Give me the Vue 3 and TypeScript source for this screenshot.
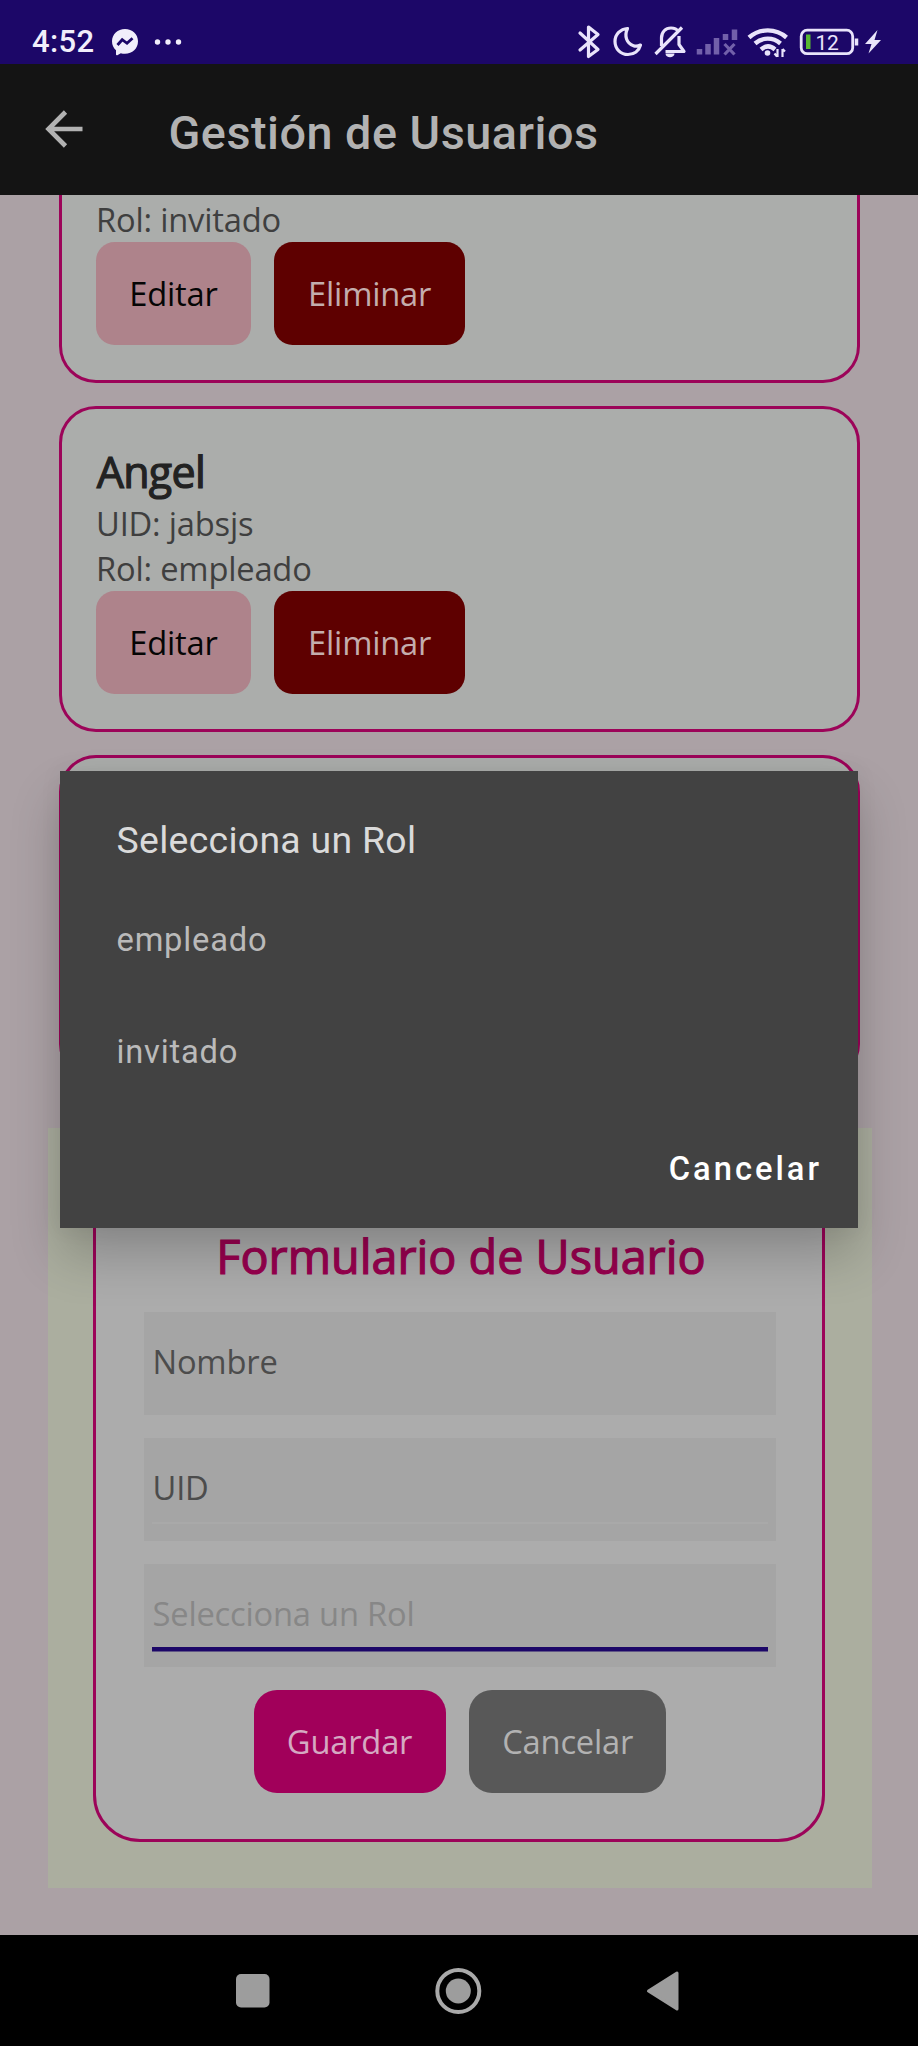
<script setup lang="ts">
interface User {
  id: number
  name?: string
  uid?: string
  role?: string
}

const users: User[] = [
  { id: 1, role: 'invitado' },
  { id: 2, name: 'Angel', uid: 'jabsjs', role: 'empleado' },
  { id: 3 },
]

const fields = [
  { label: 'Nombre', kind: 'plain' },
  { label: 'UID', kind: 'plain lined' },
  { label: 'Selecciona un Rol', kind: 'active' },
]

const roles: string[] = ['empleado', 'invitado']
</script>

<template>
  <div class="screen">
    <header class="status">
      <div class="status-left">
        <span class="clock">4:52</span>
        <svg class="messenger" width="28" height="28" viewBox="0 0 28 28">
          <path d="M14 1C6.700 1 1 6.200 1 13.300c0 3.700 1.500 6.800 4 8.900v4.300c0 .7.700 1 1.300.7l3.500-1.900c1.300.4 2.700.5 4.200.5 7.300 0 13-5.200 13-12.500S21.300 1 14 1z" fill="#f1eefb" />
          <path d="M6.500 17l4.700-5.300 4.800 3.600 5.500-5" fill="none" stroke="#1c0768" stroke-width="2.800" />
        </svg>
        <svg class="dots" width="28" height="8" viewBox="0 0 28 8">
          <circle cx="3.500" cy="4" r="2.700" /><circle cx="14" cy="4" r="2.700" /><circle cx="24.500" cy="4" r="2.700" />
        </svg>
      </div>
      <svg class="status-icons" width="320" height="64" viewBox="570 0 320 64" fill="none" stroke="#e9e4fb" stroke-width="3.200">
        <path d="M580 33l18 16.500-9.500 7V27l9.500 7.500L580 50" stroke-linejoin="round" stroke-linecap="round" />
        <path d="M627.500 28.500c-7 .5-12.500 5.800-12.500 13 0 7.500 5.800 13 13 13 6 0 11-3.700 12.500-9.500-2.500 1.200-5 1.500-7 .7-7-2.300-9.500-9.700-6-17.200z" stroke-linejoin="round" />
        <path d="M661.500 46V38c0-6 4-10 9.500-10 3.500 0 6 1.300 7.800 3.800M682 27.500L655.500 54M679 36v8.500l5 7H665.500" stroke-linejoin="round" />
        <path d="M665.500 53.500h9c0 5-9 5-9 0z" fill="#e9e4fb" stroke="none" />
        <g stroke="#7260aa" stroke-width="5.500">
          <path d="M699.500 54.500V49M708 54.500V44M716.500 54.500V38M725.500 40V34M734.500 40V29.500" />
          <path d="M724.500 44l10 10.500M734.500 44l-10 10.500" stroke-width="3.200" />
        </g>
        <g stroke-width="4.400">
          <path d="M749 37.500c10.500-9.500 27-9.500 37.500 0" />
          <path d="M755 43.500c7.500-6.500 18-6.500 25.500 0" />
          <path d="M761 49.500c4.500-4 9.500-4 14 0" />
        </g>
        <circle cx="767.500" cy="53" r="2.800" fill="#e9e4fb" stroke="none" />
        <path d="M777.500 49v8M782.500 49v8M774.500 53.500l2.500 3M785 51.500l-2.500-2.500" stroke-width="2.200" />
        <rect x="801.200" y="30.200" width="51.500" height="23.500" rx="6" stroke-width="2.800" />
        <path d="M856.500 38.500v7" stroke-width="3.500" />
        <rect x="806" y="34.500" width="4.500" height="14.500" fill="#58b832" stroke="none" />
        <path d="M877.500 30L865 44h6.500l-3 9.500L881 40h-6.500z" fill="#e9e4fb" stroke="none" />
        <text x="815.500" y="49.700" class="battery">12</text>
      </svg>
    </header>

    <div class="appbar">
      <svg width="56" height="56" viewBox="0 0 56 56" fill="none" stroke="#b2b2b2" stroke-width="4.600">
        <path d="M46.500 28H12M29.500 11L12.500 28l17 17" />
      </svg>
      <h1>Gestión de Usuarios</h1>
    </div>

    <main class="content">
      <article v-for="u in users" :key="u.id" class="card">
        <h2 v-if="u.name">{{ u.name }}</h2>
        <p v-if="u.uid">UID: {{ u.uid }}</p>
        <template v-if="u.role">
          <p>Rol: {{ u.role }}</p>
          <div class="row">
            <button class="btn edit">Editar</button>
            <button class="btn remove">Eliminar</button>
          </div>
        </template>
      </article>

      <section class="form-area">
        <form class="form" @submit.prevent>
          <h3>Formulario de Usuario</h3>
          <div v-for="f in fields" :key="f.label" class="field" :class="f.kind">{{ f.label }}</div>
          <div class="row center">
            <button class="btn save">Guardar</button>
            <button class="btn cancel">Cancelar</button>
          </div>
        </form>
      </section>
    </main>

    <nav class="nav">
      <svg width="918" height="111" viewBox="0 1935 918 111" fill="#9d9d9d">
        <rect x="236" y="1974" width="33.500" height="33.500" rx="5" />
        <circle cx="458.300" cy="1991" r="21" fill="none" stroke="#a9a9a9" stroke-width="4" />
        <circle cx="458.300" cy="1991" r="12.500" />
        <path d="M648.500 1991L677 1973v36z" stroke="#9d9d9d" stroke-width="3" stroke-linejoin="round" />
      </svg>
    </nav>

    <div class="dialog" role="dialog">
      <h4>Selecciona un Rol</h4>
      <div v-for="r in roles" :key="r" class="option">{{ r }}</div>
      <div class="actions"><button class="dismiss">Cancelar</button></div>
    </div>
  </div>
</template>

<style>
html,
body {
  margin: 0;
  background: #000;
}
</style>

<style scoped>
.screen {
  position: relative;
  display: flex;
  flex-direction: column;
  width: 918px;
  height: 2046px;
  overflow: hidden;
  font-family: "Open Sans", "Noto Sans", sans-serif;
  font-size: 32.7px;
  letter-spacing: -0.2px;
}
h1, h2, h3, h4, p {
  margin: 0;
  font-weight: 400;
}
button {
  border: 0;
  font: inherit;
  letter-spacing: inherit;
}
.status {
  flex: none;
  height: 64px;
  display: flex;
  justify-content: space-between;
  padding-right: 28px;
  background: #1c0768;
}
.status-left {
  display: flex;
  align-items: center;
  padding: 19px 0 0 32px;
}
.clock {
  width: 63px;
  font: 500 31px/36px Roboto, sans-serif;
  letter-spacing: 0.4px;
  color: #f1eefb;
}
.messenger {
  margin-left: 16px;
}
.dots {
  margin-left: 15px;
  fill: #f1eefb;
}
.battery {
  font: 400 21px Roboto, sans-serif;
  fill: #e9e4fb;
  stroke: none;
}
.appbar {
  flex: none;
  height: 131px;
  display: flex;
  background: #141414;
}
.appbar svg {
  margin: 36.5px 0 0 35.5px;
}
h1 {
  margin: 38.5px 0 0 77px;
  font: 500 46.75px/60px Roboto, sans-serif;
  letter-spacing: 0.5px;
  color: #b2b2b2;
}
.content {
  flex: 1;
  min-height: 0;
  box-sizing: border-box;
  overflow: hidden;
  display: flex;
  flex-direction: column;
  justify-content: flex-end;
  padding: 0 46px 47px 48px;
  background: #aba1a5;
}
.card {
  flex: none;
  box-sizing: border-box;
  display: flex;
  flex-direction: column;
  justify-content: flex-end;
  height: 326px;
  margin: 0 12px 23px 11px;
  padding: 34px 34px 35px;
  border: 3px solid #9c0459;
  border-radius: 37px;
  background: #abadab;
}
h2 {
  font-size: 43px;
  line-height: 57px;
  padding-bottom: 2px;
  letter-spacing: -0.7px;
  text-indent: 0.7px;
  color: #222;
  -webkit-text-stroke: 1.2px #222;
}
.card p {
  line-height: 44.5px;
  color: #3f3f3f;
}
.row {
  display: flex;
  gap: 23.4px;
}
.center {
  justify-content: center;
}
.btn {
  height: 103px;
  padding: 0 0 1px;
  border-radius: 18.5px;
}
.edit {
  width: 155px;
  background: #ae838b;
  color: #050505;
}
.remove {
  width: 190.5px;
  background: #5e0000;
  color: #c4adad;
}
.save {
  width: 192px;
  border-radius: 23px;
  background: #a1005a;
  color: #d5a9c2;
}
.cancel {
  width: 197.5px;
  border-radius: 23px;
  background: #585858;
  color: #b2b2b2;
}
.form-area {
  flex: none;
  margin-top: 24px;
  padding: 46px 46px 46px 45px;
  height: 668px;
  background: #abae9f;
}
.form {
  box-sizing: border-box;
  height: 100%;
  width: 732px;
  padding: 47px 46px 0 48px;
  border: 3px solid #9c0459;
  border-radius: 47px;
  background: #acacac;
}
h3 {
  height: 88px;
  line-height: 64px;
  font-size: 46.75px;
  letter-spacing: 0;
  text-align: center;
  text-indent: 2px;
  color: #98004f;
  -webkit-text-stroke: 1.2px #98004f;
}
.field {
  box-sizing: border-box;
  width: 632px;
  height: 103px;
  margin-bottom: 23px;
  padding: 0 8.5px;
  line-height: 99px;
  background: #a5a5a5;
  color: #4c4c4c;
}
.lined {
  background: linear-gradient(#a9a9a9, #a9a9a9) 8px 84px / 616px 2px no-repeat #a5a5a5;
}
.active {
  background: linear-gradient(#1c0768, #1c0768) 8px 82.5px / 616px 4.5px no-repeat #a5a5a5;
  color: #878787;
}
.nav {
  flex: none;
  height: 111px;
  background: #000;
}
.nav svg {
  display: block;
}
.dialog {
  position: absolute;
  left: 60px;
  top: 771px;
  box-sizing: border-box;
  width: 798px;
  height: 457px;
  padding: 45px 36px 0 56.5px;
  background: #424242;
  box-shadow: 0 28px 48px rgba(0, 0, 0, 0.2), 0 0 22px rgba(0, 0, 0, 0.06);
  font-family: Roboto, sans-serif;
}
h4 {
  height: 68px;
  font-size: 37.4px;
  line-height: 48px;
  letter-spacing: 0.3px;
  color: #dadada;
}
.option {
  height: 112px;
  line-height: 112px;
  letter-spacing: 0.8px;
  color: #bababa;
}
.actions {
  display: flex;
  justify-content: flex-end;
  padding-top: 33px;
}
.dismiss {
  padding: 0;
  background: none;
  color: #fff;
  font-weight: 500;
  line-height: 56px;
  letter-spacing: 3px;
}
</style>
